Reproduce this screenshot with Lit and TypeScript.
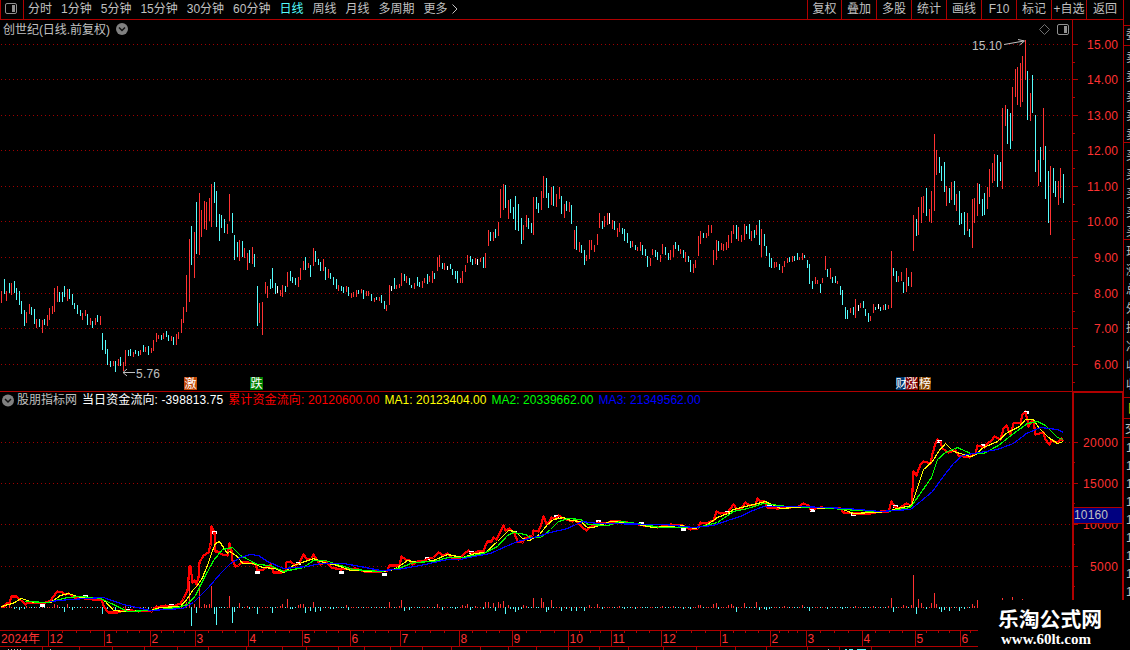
import { LitElement, html, svg, css } from 'lit';
import { customElement, property } from 'lit/decorators.js';

// one entry per trading day: colour (r up, c down, w flat), x, high, low
const CANDLES = `
r1 291 303;c4 279 294;r6 291 301;c9 283 293;r11 283 295;c14 281 293;c16 288 300;c19 291 305;c21 301 314;c24 310 326
r26 312 323;r29 304 314;c31 307 315;c34 309 324;r36 319 328;c39 319 327;r42 320 333;c44 319 325;r47 315 326;r49 308 320
r52 306 314;r54 288 312;r57 286 302;c59 292 302;c62 292 302;c64 286 297;r67 289 301;c69 289 299;c72 294 305;c74 303 309
c77 305 314;c80 310 316;r82 313 320;r85 310 316;c87 314 325;r90 318 325;c92 321 328;r95 318 325;c97 315 322;r100 316 325
c102 333 350;c105 340 354;c107 349 365;c110 361 367;r113 361 366;c115 361 372;r118 359 366;c120 357 366;r123 362 371;r125 350 366
c128 350 356;c130 349 356;r133 352 357;c135 350 354;c138 351 356;r140 350 355;c143 345 352;r145 347 352;c148 346 355;r151 348 353
r153 340 351;r156 333 342;r158 335 339;c161 335 340;r163 333 339;c166 331 337;c168 335 341;r171 336 341;c173 337 345;r176 334 345
r178 332 339;r181 319 333;r183 307 323;r186 275 312;r189 239 302;c191 226 265;r194 232 278;c196 202 254;r199 193 255;r201 210 237
r204 201 229;r206 202 230;r209 198 221;r211 184 227;c214 182 203;c216 191 227;c219 214 241;c221 215 228;c224 219 233;r227 224 234
r229 194 221;c232 213 233;c234 235 260;c237 242 257;r239 240 261;c242 241 257;r244 248 258;r247 253 270;c249 250 263;r252 247 264
c254 254 267;c257 286 326;r259 303 323;r262 302 335;r265 282 294;r267 286 298;c270 279 289;c272 268 288;c275 283 294;w277 286 293
r280 290 296;r282 285 297;c285 286 292;r287 272 287;c290 271 281;c292 277 283;c295 278 285;r298 277 287;r300 268 280;r303 261 270
c305 257 270;r308 263 268;c310 265 277;r313 248 266;c315 251 262;c318 259 265;c320 262 271;r323 259 271;c325 267 280;r328 269 278
c330 273 279;c333 277 285;c336 279 289;r338 285 291;c341 286 291;c343 287 293;r346 286 292;c348 287 296;r351 293 298;r353 292 297
r356 290 297;c358 290 294;r361 289 293;c363 290 299;r366 291 296;r368 291 296;c371 294 301;r374 298 302;c376 297 300;r379 297 301
c381 295 303;c384 301 309;r386 305 311;r389 285 305;w391 286 291;c394 278 289;r396 285 289;r399 284 288;r401 273 286;c404 274 281
r406 276 283;c409 278 285;c411 285 288;r414 283 289;c417 277 286;c419 282 287;r422 281 288;r424 278 283;c427 274 284;r429 276 282
r432 271 283;c434 273 279;r437 257 271;r439 255 267;c442 263 269;r444 263 270;w447 266 270;c450 264 269;c452 269 275;c455 271 279
c457 271 283;r460 278 283;r462 271 283;r465 265 272;r467 255 263;c470 256 262;c472 259 265;r475 258 264;w477 259 265;r480 258 262
c483 257 268;r485 253 268;r488 230 246;c490 232 241;r493 232 241;c495 229 238;r498 222 236;r500 189 218;r503 184 210;c505 185 208
r508 200 219;c510 199 213;c513 207 219;c515 196 230;c518 204 231;c521 218 244;r523 225 240;r526 215 227;c528 218 229;c531 223 233
r533 197 235;c536 197 209;c538 203 213;r541 191 210;r543 176 198;c546 178 198;c548 193 208;r551 187 205;c553 186 206;r556 194 207
r559 187 199;c561 196 214;r564 204 218;c566 201 211;r569 202 212;c571 205 224;r574 230 249;c576 226 250;r579 242 252;c581 245 253
c584 250 265;r586 255 261;r589 240 259;r591 240 250;r594 245 252;r597 234 245;r599 213 228;c602 221 229;r604 216 227;r607 213 225
w609 213 224;r612 220 229;c614 221 230;r617 228 237;r619 223 232;c622 228 234;c624 229 241;c627 233 243;c630 241 248;r632 241 247
c635 245 250;r637 247 251;r640 242 251;c642 245 255;c645 249 256;c647 256 267;r650 258 266;r652 249 255;c655 250 257;c657 252 260
r660 255 262;r662 244 254;c665 247 255;c668 253 260;r670 250 260;r673 245 257;c675 242 249;c678 245 251;r680 249 254;c683 250 258
r685 252 262;c688 256 262;c690 260 272;r693 264 273;r695 260 268;r698 236 256;r700 231 244;c703 233 238;r706 233 238;r708 225 236
r711 225 233;r713 250 265;r716 240 260;c718 241 251;r721 243 250;r723 244 251;r726 242 250;r728 235 248;r731 231 243;r733 225 234
c736 225 239;r738 227 241;r741 235 242;r744 224 240;c746 226 234;c749 224 239;r751 231 241;c754 230 238;r756 225 235;c759 220 245
r761 229 257;c764 234 246;c766 246 256;c769 253 267;c771 258 268;r774 262 268;r776 262 267;c779 264 270;r782 266 273;r784 261 267
r787 258 263;c789 257 262;r792 256 262;c794 256 261;c797 253 260;r799 257 260;r802 253 260;c804 255 258;c807 260 268;c809 264 284
c812 281 289;r815 277 284;r817 280 284;c820 284 293;r822 278 283;r825 256 270;c827 269 277;r830 268 279;c832 277 283;c835 276 283
r837 281 284;c840 286 295;c842 290 305;c845 307 319;c847 310 319;r850 308 313;c853 307 315;r855 299 318;w858 305 311;r860 303 308
c863 301 308;c865 309 316;c868 313 322;r870 316 321;r873 304 313;c875 307 310;w878 304 309;c880 307 311;r883 305 310;c885 304 310
r888 305 309;r891 251 308;c893 268 276;c896 271 282;r898 276 282;r901 272 281;c903 282 293;r906 268 292;c908 277 286;r911 272 287
r913 215 251;c916 219 236;r918 207 235;r921 197 223;r923 196 213;c926 188 216;r929 209 222;r931 191 223;r934 134 211;r936 150 175
c939 157 173;c941 166 181;c944 162 192;r946 186 206;c949 188 203;r951 182 200;c954 181 205;r956 194 211;c959 191 225;c961 213 224
c964 212 235;r967 213 231;c969 229 237;r972 199 248;r974 198 223;r977 183 216;c979 184 204;c982 199 216;c984 193 215;r987 187 209
r989 169 197;r992 163 183;r994 154 181;c997 155 187;c1000 162 181;r1002 108 189;r1005 105 126;c1007 109 144;c1010 113 149;r1012 87 141
r1015 69 97;r1017 67 105;r1020 63 107;r1022 56 102;r1025 40 80;c1027 71 120;r1030 93 121;c1032 75 113;c1035 115 172;r1038 160 186
c1040 147 182;r1043 108 160;c1045 146 199;c1048 171 223;r1050 166 235;c1053 168 193;c1055 181 197;r1058 181 205;r1060 168 198;c1063 174 203
`;

// daily money flow, x:height, positive is an inflow; days not listed get a 1px mark
const FLOWS = `
4:2 9:3 14:-2 19:-3 22:-3 24:-2 26:2 54:4 57:3 64:-5 67:4 72:-3 102:-7 107:-2 115:-3 125:3 148:-2 156:3 163:2 181:3
186:6 189:27 191:-19 194:4 196:-6 199:23 204:4 206:3 209:4 211:22 214:-7 216:-18 229:12 232:-16 234:-5 239:5 247:2
249:-2 257:-7 272:-6 280:2 282:4 287:9 290:-2 292:-2 298:3 300:4 303:4 305:-6 310:-4 313:6 315:-5 320:-4 330:-2
333:-2 346:3 348:-3 389:6 399:2 401:8 404:-4 409:-3 437:4 442:-3 455:-2 462:3 465:2 467:4 470:-3 475:2 483:-2 485:6
488:6 493:5 495:-4 498:6 500:4 503:7 505:-7 508:3 510:-2 513:-2 515:-5 518:-3 521:-2 523:3 526:2 533:10 541:10 543:6
546:-5 548:-3 551:8 561:-4 566:-2 571:-4 576:-4 584:-4 589:3 597:4 602:-2 619:2 624:-2 635:-2 662:2 673:2 683:-2
690:-2 698:3 700:3 713:4 716:5 718:-2 728:3 731:4 733:2 736:-5 744:5 756:6 759:-3 764:-2 766:-3 769:-2 784:2 802:3
809:-4 827:-2 842:-2 855:2 873:2 888:2 891:10 893:-5 903:3 906:2 911:3 913:33 916:-7 918:9 921:5 926:-2 931:5
934:15 936:4 939:-2 941:-5 944:-3 949:-4 959:-4 964:-2 972:4 974:2 977:8 1002:10 1012:11 1022:9
`;

const TOTAL = `1,606 4,606 6,603 9,602 11,596 16,596 19,599 22,601 25,604 27,602 31,602 40,603 45,602 50,600 53,596 57,591 62,592
65,594 68,593 74,597 85,598 92,599 101,600 104,607 108,612 117,612 125,609 138,611 145,610 151,611 155,607 165,605 172,606
180,603 183,598 187,590 188,578 189,566 190,566 192,582 194,580 196,584 198,577 199,562 203,555 208,552 210,545 211,526
214,532 215,551 217,551 222,554 227,555 229,543 231,550 232,560 235,566 238,565 241,562 248,562 255,564 257,570 263,569
266,567 270,564 273,572 281,572 285,570 286,562 290,561 295,565 299,562 303,554 306,558 309,559 311,558 313,554 316,559
320,564 325,561 331,567 340,569 355,568 364,571 373,571 381,571 387,570 389,565 399,565 401,556 405,559 409,560 412,564
417,561 423,561 427,558 433,557 438,552 443,555 447,553 451,557 458,559 463,554 468,550 472,553 477,551 483,551 485,545
487,541 491,541 493,537 496,539 500,531 503,525 505,530 509,528 514,533 517,541 522,542 524,538 529,536 532,535 533,530
538,531 541,523 543,516 546,523 548,523 551,517 555,518 558,515 563,518 572,521 575,519 578,523 582,527 586,530 589,527
595,524 598,522 605,523 610,521 620,521 633,523 643,525 657,527 670,524 682,525 690,529 697,528 700,522 705,523 713,520
716,511 720,513 727,512 733,504 737,509 741,508 745,502 749,505 755,504 757,498 760,501 764,501 767,507 777,508 790,507
798,506 803,503 808,505 810,509 820,507 840,508 843,512 853,513 870,513 880,511 888,511 891,501 894,506 898,508 906,503
911,505 912,490 913,471 916,475 920,464 923,461 930,463 932,453 935,443 937,439 940,441 942,448 948,452 955,450 958,455
963,456 969,457 975,453 977,445 984,447 987,443 991,440 994,436 1000,439 1003,428 1006,425 1010,434 1013,423 1020,422
1022,414 1025,411 1027,420 1028,426 1031,421 1033,421 1035,434 1043,432 1045,439 1049,444 1051,440 1057,442 1061,438 1063,441`;

const MA1 = `1,606 12,603 21,598 33,602 50,602 60,595 68,593 80,597 100,598 105,601 113,610 124,611 150,610 160,607 180,606 187,598
192,590 197,585 202,577 207,565 212,550 215,543 219,541 227,553 229,551 237,556 242,563 253,563 262,567 275,568 283,572
293,565 302,562 313,558 323,562 337,565 350,570 380,571 390,570 397,567 407,560 417,562 433,560 447,554 462,557 475,553
485,552 497,541 508,530 515,531 522,538 529,540 539,534 547,524 553,519 563,517 570,520 580,521 587,527 593,527 610,521
627,522 653,527 680,525 695,528 707,524 717,517 727,513 733,509 753,504 765,501 780,508 807,506 820,508 840,508 853,513
873,512 887,511 897,508 911,505 917,487 923,469 932,461 938,451 945,443 953,451 970,456 974,455 983,447 997,441 1007,432
1019,426 1025,419 1033,419 1038,427 1048,437 1057,443 1063,441`;

const MA2 = `25,601 47,602 67,597 80,596 100,598 115,605 127,611 150,610 177,607 187,604 195,595 203,579 213,560 222,549 232,547
240,555 257,564 270,565 283,571 303,567 313,560 325,560 340,565 353,569 380,571 398,568 413,562 433,561 448,557 463,557
483,553 497,546 507,535 513,532 525,534 530,537 540,537 550,529 558,521 568,518 580,519 588,524 607,525 620,521 637,523
660,527 697,527 717,522 733,511 747,508 763,503 787,506 820,507 843,509 873,511 887,511 910,507 917,497 931,477 937,459
945,452 957,447 970,453 983,453 998,445 1013,433 1027,423 1037,421 1045,425 1057,437 1063,439`;

const MA3 = `50,601 70,599 103,597 123,604 150,610 182,608 193,602 200,595 208,587 220,573 230,563 240,557 250,554 258,555 267,561
283,568 307,566 320,563 343,563 360,566 380,570 397,569 420,565 447,559 460,559 473,556 490,553 503,547 517,541 537,536
550,532 567,528 582,521 597,523 663,524 693,527 713,525 730,519 740,516 750,511 763,506 800,506 847,508 880,511 910,509
920,501 932,491 942,477 953,463 962,455 973,453 997,449 1013,443 1026,433 1040,427 1057,429 1063,432`;

const MARKS = [
  [42, 604], [85, 595], [128, 609], [171, 604], [214, 531], [257, 571], [298, 562], [341, 571], [384, 573],
  [427, 557], [471, 551], [514, 531], [556, 515], [598, 520], [641, 522], [683, 528], [727, 511], [769, 505],
  [812, 509], [853, 513], [895, 505], [939, 440], [983, 444], [1026, 411],
];

const PRICES: [string, number][] = [
  ['15.00', 44], ['14.00', 79], ['13.00', 115], ['12.00', 150], ['11.00', 186],
  ['10.00', 221], ['9.00', 257], ['8.00', 293], ['7.00', 328], ['6.00', 364],
];

const TOTALS: [string, number][] = [['20000', 442], ['15000', 483], ['10000', 524], ['5000', 566]];

const MONTHS: [string, number][] = [
  ['12', 48], ['1', 104], ['2', 150], ['3', 195], ['4', 248], ['5', 302], ['6', 350], ['7', 400], ['8', 459],
  ['9', 512], ['10', 568], ['11', 611], ['12', 661], ['1', 720], ['2', 770], ['3', 806], ['4', 862], ['5', 915], ['6', 960],
];

const LOWER_TICKS = [
  42, 79, 112, 144, 177, 208, 246, 282, 306, 338, 364, 390, 422, 451, 480, 508, 536, 568, 599, 628, 663, 696,
  735, 766, 807, 839, 871,
];

const COLORS: Record<string, string> = { r: '#ff3232', c: '#54fcfc', w: '#ffffff' };

const candles = CANDLES.trim().split(/[;\n]/).map((s) => {
  const [x, high, low] = s.slice(1).split(' ').map(Number);
  return { kind: s[0], x, high, low };
});

const flows = new Map(FLOWS.trim().split(/\s+/).map((s) => s.split(':').map(Number) as [number, number]));

const grid = (y: number) => svg`<line x1="1" y1=${y + 0.5} x2="1072" y2=${y + 0.5} stroke="#a00000" stroke-dasharray="1 3" />`;

const axisLabel = (text: string, y: number) => svg`
  <text x="1118" y=${y + 5} text-anchor="end" textLength=${text.length === 4 ? (text.includes('.') ? 24 : 28) : (text.includes('.') ? 31 : 35)} fill="#ff3232">${text}</text>
  <rect x="1073" y=${y} width="5" height="1" fill="#b00000" />`;

const chartStyles = css`
  :host { display: block; }
  svg { display: block; }
  text {
    font-family: "Liberation Sans", "Noto Sans CJK SC", sans-serif;
    font-size: 12px;
  }
`;

@customElement('tool-bar')
class ToolBar extends LitElement {
  static styles = css`
    :host {
      display: flex;
      justify-content: space-between;
      box-sizing: border-box;
      height: 20px;
      width: 1124px;
      border-bottom: 1px solid #b00000;
      font: 12px/19px "Liberation Sans", "Noto Sans CJK SC", sans-serif;
      color: #c0c0c0;
      white-space: nowrap;
    }
    .periods, .actions { display: flex; }
    .toggle {
      display: flex;
      box-sizing: border-box;
      width: 24px;
      padding: 3px 0 0 4px;
      border-left: 1px solid #b00000;
      border-right: 1px solid #b00000;
      margin-right: 4px;
    }
    .period { margin-right: 9px; }
    .period.active { color: #54fcfc; }
    .more { margin: 4px 0 0 -6px; }
    .action {
      box-sizing: border-box;
      width: 35px;
      border-left: 1px solid #b00000;
      text-align: center;
    }
    .action:first-child { width: 34px; }
    .action:last-child {
      width: 38px;
      border-right: 1px solid #b00000;
    }
  `;

  periods = ['分时', '1分钟', '5分钟', '15分钟', '30分钟', '60分钟', '日线', '周线', '月线', '多周期', '更多'];
  actions = ['复权', '叠加', '多股', '统计', '画线', 'F10', '标记', '+自选', '返回'];

  render() {
    return html`
      <div class="periods">
        <div class="toggle">
          <svg width="13" height="12">
            <rect x="0.5" y="0.5" width="11" height="10" rx="1.5" fill="none" stroke="#909090" />
            <rect x="7" y="2" width="3" height="7" fill="#909090" />
          </svg>
        </div>
        ${this.periods.map((p) => html`<span class="period ${p === '日线' ? 'active' : ''}">${p}</span>`)}
        <svg class="more" width="7" height="10"><path d="M1.5 0.5L6 5L1.5 9.5" fill="none" stroke="#c0c0c0" /></svg>
      </div>
      <div class="actions">${this.actions.map((a) => html`<span class="action">${a}</span>`)}</div>
    `;
  }
}

@customElement('price-chart')
class PriceChart extends LitElement {
  static styles = chartStyles;

  badge(x: number, width: number, fill: string, text: string) {
    return svg`
      <rect x=${x} y="377" width=${width} height="13" fill=${fill} />
      <text x=${x + width / 2} y="388" text-anchor="middle" fill="#fff">${text}</text>`;
  }

  render() {
    return html`
      <svg width="1124" height="371" viewBox="0 20 1124 371" shape-rendering="crispEdges">
        ${PRICES.map(([, y]) => grid(y))}
        ${candles.map((c) => svg`<rect x=${c.x} y=${c.high} width="1" height=${c.low - c.high} fill=${COLORS[c.kind]} />`)}
        <rect x="1072" y="20" width="1" height="371" fill="#b00000" />
        <rect x="1123" y="20" width="1" height="371" fill="#b00000" />
        ${PRICES.map(([t, y]) => axisLabel(t, y))}
        ${PRICES.map(([, y]) => svg`<rect x="1073" y=${y + 18} width="2" height="1" fill="#b00000" />`)}
        <text x="3" y="34" fill="#c0c0c0" textLength="107">创世纪(日线.前复权)</text>
        <g shape-rendering="auto" fill="none">
          <circle cx="122" cy="29" r="6" fill="#808080" />
          <path d="M119 27.5L122 30.5L125 27.5" stroke="#111" stroke-width="1.5" />
          <path d="M1044.5 24.5L1049.5 29.5L1044.5 34.5L1039.5 29.5Z" stroke="#707070" />
          <rect x="1057.5" y="24.5" width="11" height="10" rx="1.5" stroke="#909090" />
          <rect x="1064" y="26" width="3" height="7" fill="#909090" />
          <path d="M1004 44.5L1024 41M1018 39.5L1024.5 41L1019.5 45" stroke="#c0c0c0" />
          <path d="M135 372.5H123M127 369L123 372.5L127 376" stroke="#c0c0c0" />
        </g>
        <text x="972" y="50" fill="#c0c0c0" textLength="30">15.10</text>
        <text x="136" y="378" fill="#c0c0c0" textLength="24">5.76</text>
        ${this.badge(184, 13, '#c04808', '激')}
        ${this.badge(250, 13, '#008000', '跌')}
        ${this.badge(896, 11, '#003870', '财')}
        ${this.badge(919, 12, '#884400', '榜')}
        ${this.badge(906, 12, '#800000', '涨')}
      </svg>
    `;
  }
}

@customElement('flow-legend')
class FlowLegend extends LitElement {
  static styles = css`
    :host {
      display: flex;
      gap: 5px;
      box-sizing: border-box;
      height: 18px;
      width: 1072px;
      padding-left: 2px;
      border-top: 1px solid #b00000;
      font: 12px/17px "Liberation Sans", "Noto Sans CJK SC", sans-serif;
      white-space: nowrap;
    }
    svg { margin: 2px -2px 0 0; }
    .name { color: #c0c0c0; }
    .day { color: #fff; letter-spacing: 0.1px; }
    .total { color: #f00; letter-spacing: 0.13px; }
    .ma1 { color: #ff0; letter-spacing: 0.04px; }
    .ma2 { color: #0f0; letter-spacing: 0.04px; }
    .ma3 { color: #00f; letter-spacing: 0.04px; }
  `;

  render() {
    return html`
      <svg width="12" height="13">
        <circle cx="6" cy="6.5" r="6" fill="#808080" />
        <path d="M3 5L6 8L9 5" fill="none" stroke="#111" stroke-width="1.5" />
      </svg>
      <span class="name">股朋指标网</span>
      <span class="day">当日资金流向: -398813.75</span>
      <span class="total">累计资金流向: 20120600.00</span>
      <span class="ma1">MA1: 20123404.00</span>
      <span class="ma2">MA2: 20339662.00</span>
      <span class="ma3">MA3: 21349562.00</span>
    `;
  }
}

@customElement('flow-chart')
class FlowChart extends LitElement {
  static styles = chartStyles;

  curve(points: string, color: string, width = 1) {
    return svg`<polyline points=${points} fill="none" stroke=${color} stroke-width=${width} stroke-linejoin="round" />`;
  }

  render() {
    return html`
      <svg width="1124" height="221" viewBox="0 409 1124 221" shape-rendering="crispEdges">
        ${TOTALS.map(([, y]) => grid(y))}
        ${candles.map((c) => {
          const h = flows.get(c.x) ?? (c.kind === 'c' ? -1 : 1);
          return svg`<rect x=${c.x} y=${h > 0 ? 608 - h : 607} width="1" height=${Math.abs(h)} fill=${h > 0 ? COLORS.r : COLORS.c} />`;
        })}
        <g transform="translate(0.5 0.5)">
          ${MARKS.map(([x, y]) => svg`<rect x=${x - 2.5} y=${y - 0.5} width="5" height="3" fill="#fff" />`)}
          ${this.curve(TOTAL, '#ff0000', 2.2)}
          ${MARKS.map(([x, y]) => svg`<rect x=${x - 2.5} y=${y - 0.5} width="4" height="1" fill="#fff" />`)}
          ${this.curve(MA1, '#ffff00', 1.2)}
          ${this.curve(MA2, '#00ff00', 1.2)}
          ${this.curve(MA3, '#0000ff', 1.2)}
        </g>
        <rect x="1072" y="409" width="2" height="192" fill="#b00000" />
        <rect x="1122" y="409" width="2" height="192" fill="#b00000" />
        ${TOTALS.map(([t, y]) => axisLabel(t, y))}
        ${TOTALS.map(([, y]) => svg`<rect x="1074" y=${y + 20} width="1" height="1" fill="#b00000" />`)}
        <rect x="1074" y="507" width="48" height="17" fill="#b00000" />
        <rect x="1074" y="508" width="48" height="15" fill="#000080" />
        <text x="1074" y="519" fill="#c0c0c0" textLength="34">10160</text>
      </svg>
    `;
  }
}

@customElement('time-axis')
class TimeAxis extends LitElement {
  static styles = chartStyles;

  render() {
    const starts = [0, ...MONTHS.map(([, x]) => x), 1000];
    return html`
      <svg width="1124" height="20" viewBox="0 630 1124 20" shape-rendering="crispEdges">
        <rect x="0" y="630" width="978" height="1" fill="#b00000" />
        <rect x="0" y="646" width="978" height="1" fill="#b00000" />
        <text x="1" y="643" fill="#ff3232" textLength="39">2024年</text>
        ${MONTHS.map(([t, x]) => svg`
          <rect x=${x} y="630" width="1" height="16" fill="#b00000" />
          <text x=${x + 1.5} y="643" fill="#ff3232">${t}</text>`)}
        ${starts.slice(2).map((end, i) => [1, 2, 3].map((n) => svg`
          <rect x=${Math.round(starts[i + 1] + ((end - starts[i + 1]) * n) / 4)} y="631" width="1" height="2" fill="#b00000" />`))}
        ${LOWER_TICKS.map((x) => svg`<rect x=${x} y="647" width="1" height="3" fill="#b00000" />`)}
        <path d="M8 649.5H22M50 649.5H52M828 649.5H829" stroke="#c0c0c0" stroke-dasharray="1 2" />
        <path d="M845 649.5H847M849 649.5H853M857 649.5H866" stroke="#54fcfc" />
      </svg>
    `;
  }
}

// left edge of the quote panel, cut off by the window
@customElement('quote-strip')
class QuoteStrip extends LitElement {
  static styles = css`
    :host {
      display: block;
      width: 6px;
      height: 600px;
      overflow: hidden;
    }
    svg { display: block; }
    text { font: 12px "Liberation Sans", "Noto Sans CJK SC", sans-serif; }
  `;

  @property({ attribute: false }) rows: [string, number][] = [
    ['委', 39], ['卖', 62], ['卖', 81], ['卖', 101], ['卖', 120], ['卖', 139], ['买', 160], ['买', 179], ['买', 198],
    ['买', 217], ['买', 236], ['现', 256], ['涨', 275], ['总', 294], ['外', 313], ['换', 332], ['净', 351], ['收', 370], ['收', 389],
  ];

  render() {
    return html`
      <svg width="6" height="600" viewBox="1124 0 6 600" shape-rendering="crispEdges">
        ${[25, 45, 142, 239, 397, 418, 437].map((y) => svg`<rect x="1124" y=${y} width="6" height="1" fill="#b00000" />`)}
        ${this.rows.map(([t, y]) => svg`<text x="1126" y=${y} fill="#c0c0c0">${t}</text>`)}
        <text x="1127" y="413" fill="#c8c800">日</text>
        <text x="1125" y="433" fill="#c0c0c0">交</text>
        ${Array.from({ length: 9 }, (_, i) => svg`<text x="1126" y=${452 + i * 18} fill="#c0c0c0">1</text>`)}
      </svg>
    `;
  }
}

@customElement('app-root')
class AppRoot extends LitElement {
  static styles = css`
    :host {
      display: flex;
      position: relative;
      width: 1130px;
      height: 650px;
      overflow: hidden;
      background: #000;
    }
    .charts {
      display: flex;
      flex-direction: column;
      width: 1124px;
    }
    .legend-row {
      display: flex;
      height: 18px;
    }
    .corner {
      box-sizing: border-box;
      width: 52px;
      border: 2px solid #b00000;
      border-bottom: none;
    }
    .watermark {
      position: absolute;
      right: 0;
      bottom: 0;
      box-sizing: border-box;
      width: 152px;
      height: 50px;
      padding: 6px 0 0 20px;
      background: #000;
      color: #fff;
      font: bold 20.8px/25px "Noto Sans CJK SC", sans-serif;
    }
    .site {
      padding-left: 3px;
      font: bold 15px/16px "Liberation Serif", serif;
    }
  `;

  render() {
    return html`
      <div class="charts">
        <tool-bar></tool-bar>
        <price-chart></price-chart>
        <div class="legend-row">
          <flow-legend></flow-legend>
          <div class="corner"></div>
        </div>
        <flow-chart></flow-chart>
        <time-axis></time-axis>
      </div>
      <quote-strip></quote-strip>
      <div class="watermark">
        <div>乐淘公式网</div>
        <div class="site">www.60lt.com</div>
      </div>
    `;
  }
}
